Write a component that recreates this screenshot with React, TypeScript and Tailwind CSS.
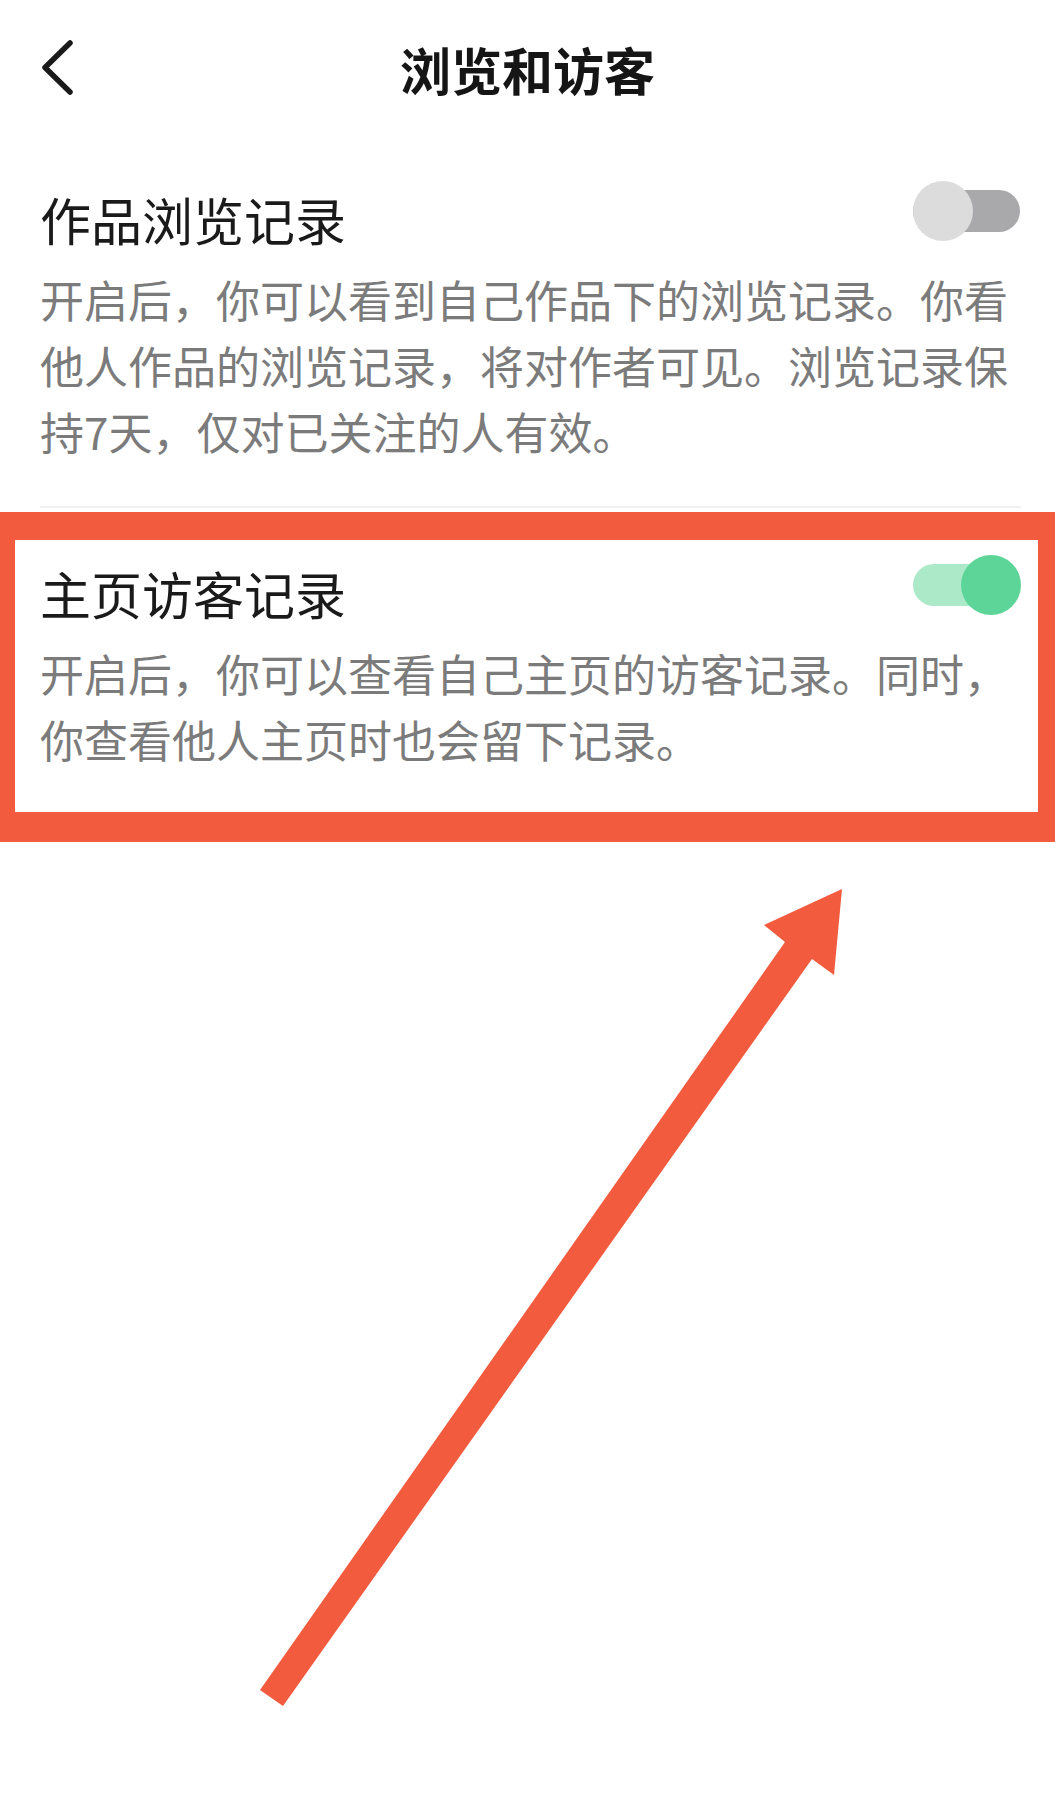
import React, { useState } from 'react';

const FONT = "font-['Noto_Sans_CJK_SC','Noto_Sans',sans-serif]";

interface ToggleProps {
  on: boolean;
  onChange: () => void;
}

function Toggle({ on, onChange }: ToggleProps) {
  return (
    <button onClick={onChange} className="relative w-[108px] h-[60px] shrink-0">
      <span
        className={`absolute left-0 right-px top-[9px] h-[42px] rounded-full ${on ? 'bg-[#abe9c9]' : 'bg-[#a9a9ab]'}`}
      />
      <span
        className={`absolute top-0 w-[60px] h-[60px] rounded-full ${on ? 'right-0 bg-[#5dd598]' : 'left-0 bg-[#dcdcdd]'}`}
      />
    </button>
  );
}

interface SettingProps {
  title: string;
  desc: string;
  on: boolean;
  onChange: () => void;
  pt: string;
}

function SettingRow({ title, desc, on, onChange, pt }: SettingProps) {
  return (
    <div className={`pl-[40px] pr-[34px] ${pt}`}>
      <div className="flex items-start justify-between">
        <h2 className="mt-[8px] text-[51px] leading-[60px] font-normal text-[#1a1a1a]">{title}</h2>
        <Toggle on={on} onChange={onChange} />
      </div>
      <p className="mt-[17px] text-[44px] leading-[66px] text-[#7b7b7b]">{desc}</p>
    </div>
  );
}

export default function App() {
  const [worksHistory, setWorksHistory] = useState(false);
  const [visitorHistory, setVisitorHistory] = useState(true);

  return (
    <div className={`relative w-[1055px] h-[1798px] bg-white overflow-hidden ${FONT}`}>
      {/* Header */}
      <header className="h-[138px] flex items-center px-[40px]">
        <div className="w-[60px]">
          <svg width="40" height="60" viewBox="0 0 40 60" fill="none">
            <polyline
              points="30,4 5,28.5 30,53"
              stroke="#1a1a1a"
              strokeWidth="5.5"
              strokeLinecap="round"
              strokeLinejoin="round"
            />
          </svg>
        </div>
        <h1 className="flex-1 text-center text-[51px] font-bold leading-none text-[#151515]">浏览和访客</h1>
        <div className="w-[60px]" />
      </header>

      <SettingRow
        pt="pt-[43px]"
        title="作品浏览记录"
        desc="开启后，你可以看到自己作品下的浏览记录。你看他人作品的浏览记录，将对作者可见。浏览记录保持7天，仅对已关注的人有效。"
        on={worksHistory}
        onChange={() => setWorksHistory(!worksHistory)}
      />

      <div className="mr-[34px] ml-[40px] mt-[42px] h-[2px] bg-[#f1f1f1]" />

      <SettingRow
        pt="pt-[47px]"
        title="主页访客记录"
        desc="开启后，你可以查看自己主页的访客记录。同时，你查看他人主页时也会留下记录。"
        on={visitorHistory}
        onChange={() => setVisitorHistory(!visitorHistory)}
      />

      {/* highlight frame + pointer */}
      <div className="absolute left-0 top-[512px] w-[1055px] h-[330px] border-[#f35b3f] border-l-[15px] border-r-[17px] border-t-[28px] border-b-[30px] pointer-events-none" />
      <svg
        className="absolute left-0 top-0 pointer-events-none"
        width="1055"
        height="1798"
        viewBox="0 0 1055 1798"
      >
        <polygon
          points="260,1690 785,942 764,925 842,889 834,975 812,959 283,1706"
          fill="#f35b3f"
        />
      </svg>
    </div>
  );
}
